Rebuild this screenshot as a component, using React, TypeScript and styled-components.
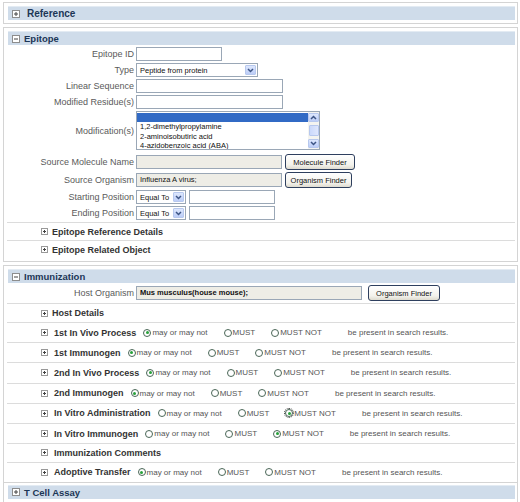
import React from "react";
import styled, { createGlobalStyle } from "styled-components";

const GlobalStyle = createGlobalStyle`
  html, body {
    margin: 0;
    padding: 0;
    background: #fff;
  }
  body {
    font-family: "Liberation Sans", Arial, sans-serif;
    font-size: 9px;
    color: #555;
  }
`;

const Page = styled.div`
  width: 520px;
  padding: 2px 2px 0 3px;
  box-sizing: border-box;
`;

const Panel = styled.section<{ $joined?: boolean; $flush?: boolean }>`
  border: 1px solid #d4d4d4;
  border-top: ${(p) => (p.$joined ? "none" : "1px solid #d4d4d4")};
  padding: ${(p) => (p.$joined ? "2px" : "3px")} 2px ${(p) => (p.$flush ? "0" : "3px")} 4px;
  margin-bottom: ${(p) => (p.$flush ? "0" : "3px")};
`;

const Header = styled.div`
  display: flex;
  align-items: center;
  gap: 4px;
  height: 13px;
  padding-left: 4px;
  background: #cfdcea;
  border-top: 1px solid #e3ebf3;
  font-size: 9.5px;
  font-weight: bold;
  color: #1c3656;
`;

const HeaderTitle = styled.span<{ $large?: boolean }>`
  font-size: ${(p) => (p.$large ? "10px" : "9.5px")};
  margin-left: ${(p) => (p.$large ? "3px" : "0")};
`;

const ToggleBox = styled.span<{ $size: number }>`
  display: inline-flex;
  width: ${(p) => p.$size}px;
  height: ${(p) => p.$size}px;
  flex: none;
`;

const Toggle = ({ open }: { open?: boolean }) => (
  <ToggleBox $size={8}>
    <svg width="8" height="8" viewBox="0 0 8 8">
      <rect x="0.5" y="0.5" width="7" height="7" fill="#fff" stroke="#8d8d8d" />
      <path d="M2 4h4" stroke="#444" />
      {!open && <path d="M4 2v4" stroke="#444" />}
    </svg>
  </ToggleBox>
);

const SmallToggle = () => (
  <ToggleBox $size={7}>
    <svg width="7" height="7" viewBox="0 0 7 7">
      <rect x="0.5" y="0.5" width="6" height="6" fill="#fff" stroke="#999" />
      <path d="M2 3.5h3M3.5 2v3" stroke="#444" />
    </svg>
  </ToggleBox>
);

const FormGrid = styled.div`
  display: grid;
  grid-template-columns: 126px auto;
  column-gap: 2px;
  row-gap: 2px;
  padding-top: 2px;
  align-items: center;
`;

const Label = styled.div<{ $tall?: boolean }>`
  text-align: right;
  font-size: 9px;
  color: #5a5a5a;
  white-space: nowrap;
  margin-bottom: ${(p) => (p.$tall ? "2px" : "0")};
`;

const Field = styled.div<{ $tall?: boolean }>`
  display: flex;
  align-items: center;
  gap: 3px;
  margin-bottom: ${(p) => (p.$tall ? "2px" : "0")};
`;

const TextBox = styled.div<{ $w: number; $filled?: boolean; $bold?: boolean }>`
  width: ${(p) => p.$w}px;
  height: 14px;
  box-sizing: border-box;
  border: 1px solid #9aa7b6;
  background: ${(p) => (p.$filled ? "#eeede6" : "#fff")};
  font-size: 7.5px;
  font-weight: ${(p) => (p.$bold ? "bold" : "normal")};
  color: #111;
  line-height: 12px;
  padding-left: 3px;
  white-space: nowrap;
  overflow: hidden;
`;

const SelectBox = styled.div<{ $w: number }>`
  width: ${(p) => p.$w}px;
  height: 14px;
  box-sizing: border-box;
  border: 1px solid #9aa7b6;
  background: #fff;
  display: flex;
  align-items: center;
  justify-content: space-between;
  padding: 0 1px 0 3px;
  font-size: 7.5px;
  color: #111;
`;

const ArrowBtn = styled.span<{ $h?: number }>`
  width: 11px;
  height: ${(p) => p.$h ?? 10}px;
  box-sizing: border-box;
  border: 1px solid #b7c8ee;
  border-radius: 1px;
  background: linear-gradient(#dde7fd, #bccdf7);
  display: inline-flex;
  align-items: center;
  justify-content: center;
  flex: none;
`;

const Chevron = ({ up }: { up?: boolean }) => (
  <svg width="7" height="5" viewBox="0 0 7 5">
    <path
      d={up ? "M1 4L3.5 1.5L6 4" : "M1 1L3.5 3.5L6 1"}
      fill="none"
      stroke="#3d5585"
      strokeWidth="1.5"
    />
  </svg>
);

const Select = ({ w, value }: { w: number; value: string }) => (
  <SelectBox $w={w}>
    <span>{value}</span>
    <ArrowBtn>
      <Chevron />
    </ArrowBtn>
  </SelectBox>
);

const ListBox = styled.div`
  width: 184px;
  height: 39px;
  box-sizing: border-box;
  border: 1px solid #9aa7b6;
  background: #fff;
  display: flex;
  overflow: hidden;
`;

const Options = styled.div`
  flex: 1;
  font-size: 7.5px;
  color: #111;
  padding-top: 1px;
`;

const Option = styled.div<{ $selected?: boolean }>`
  height: 9.3px;
  line-height: 9.3px;
  padding-left: 3px;
  white-space: nowrap;
  background: ${(p) => (p.$selected ? "#316ac5" : "transparent")};
`;

const ScrollTrack = styled.div`
  width: 11px;
  background: #f4f4f0;
  display: flex;
  flex-direction: column;
  justify-content: space-between;
  align-items: center;
  padding: 1px 0;
`;

const Thumb = styled.span`
  width: 10px;
  height: 11px;
  box-sizing: border-box;
  border: 1px solid #b7c8ee;
  border-radius: 1px;
  background: linear-gradient(90deg, #cbd9fb, #dfe7fd);
`;

const Button = styled.div<{ $w: number; $push?: number }>`
  width: ${(p) => p.$w}px;
  height: 16px;
  box-sizing: border-box;
  margin-left: ${(p) => p.$push ?? 0}px;
  border: 1px solid #2e3f5e;
  border-radius: 3px;
  background: linear-gradient(#ffffff, #f3f2ec 70%, #dedbcf);
  font-size: 7.5px;
  color: #111;
  display: flex;
  align-items: center;
  justify-content: center;
  white-space: nowrap;
  flex: none;
`;

const SubRow = styled.div<{ $h?: number; $first?: boolean }>`
  display: flex;
  align-items: center;
  height: ${(p) => p.$h ?? 17}px;
  margin-left: -1px;
  padding-left: 34px;
  border-top: 1px solid #dcdcdc;
  margin-top: ${(p) => (p.$first ? "2px" : "0")};
  white-space: nowrap;
`;

const SubTitle = styled.span<{ $gap?: number }>`
  font-size: 9px;
  font-weight: bold;
  color: #333;
  margin-left: ${(p) => p.$gap ?? 4}px;
`;

const RadioGroup = styled.div`
  display: flex;
  align-items: center;
  margin-left: 7px;
  font-size: 8px;
  color: #555;
`;

const RadioItem = styled.span`
  display: inline-flex;
  align-items: center;
  margin-right: 16px;
`;

const RadioDot = styled.span<{ $checked?: boolean; $focus?: boolean }>`
  width: 8px;
  height: 8px;
  box-sizing: border-box;
  border: 1px solid #4a6657;
  border-radius: 50%;
  margin-right: 1px;
  display: inline-flex;
  align-items: center;
  justify-content: center;
  outline: ${(p) => (p.$focus ? "1px dotted #333" : "none")};
  outline-offset: 0;
  &::after {
    content: "";
    width: 3px;
    height: 3px;
    border-radius: 50%;
    background: ${(p) => (p.$checked ? "#27a13a" : "transparent")};
  }
`;

const Trailing = styled.span`
  margin-left: 10px;
`;

const choices = ["may or may not", "MUST", "MUST NOT"];

const Radios = ({ checked, focus }: { checked: number; focus?: boolean }) => (
  <RadioGroup>
    {choices.map((c, i) => (
      <RadioItem key={c}>
        <RadioDot $checked={checked === i} $focus={focus && checked === i} />
        {c}
      </RadioItem>
    ))}
    <Trailing>be present in search results.</Trailing>
  </RadioGroup>
);

type ImmRow = { title: string; checked?: number; focus?: boolean };

const immunizationRows: ImmRow[] = [
  { title: "1st In Vivo Process", checked: 0 },
  { title: "1st Immunogen", checked: 0 },
  { title: "2nd In Vivo Process", checked: 0 },
  { title: "2nd Immunogen", checked: 0 },
  { title: "In Vitro Administration", checked: 2, focus: true },
  { title: "In Vitro Immunogen", checked: 2 },
  { title: "Immunization Comments" },
  { title: "Adoptive Transfer", checked: 0 },
];

const modifications = [
  "",
  "1,2-dimethylpropylamine",
  "2-aminoisobutiric acid",
  "4-azidobenzoic acid (ABA)",
];

export default function App() {
  return (
    <>
      <GlobalStyle />
      <Page>
        <Panel>
          <Header>
            <Toggle />
            <HeaderTitle $large>Reference</HeaderTitle>
          </Header>
        </Panel>

        <Panel>
          <Header>
            <Toggle open />
            <HeaderTitle>Epitope</HeaderTitle>
          </Header>
          <FormGrid>
            <Label>Epitope ID</Label>
            <Field>
              <TextBox $w={86} />
            </Field>
            <Label>Type</Label>
            <Field>
              <Select w={122} value="Peptide from protein" />
            </Field>
            <Label>Linear Sequence</Label>
            <Field>
              <TextBox $w={147} />
            </Field>
            <Label>Modified Residue(s)</Label>
            <Field>
              <TextBox $w={147} />
            </Field>
            <Label $tall>Modification(s)</Label>
            <Field $tall>
              <ListBox>
                <Options>
                  {modifications.map((m, i) => (
                    <Option key={i} $selected={i === 0}>
                      {m}
                    </Option>
                  ))}
                </Options>
                <ScrollTrack>
                  <ArrowBtn $h={9}>
                    <Chevron up />
                  </ArrowBtn>
                  <Thumb />
                  <ArrowBtn $h={9}>
                    <Chevron />
                  </ArrowBtn>
                </ScrollTrack>
              </ListBox>
            </Field>
            <Label>Source Molecule Name</Label>
            <Field>
              <TextBox $w={146} $filled />
              <Button $w={70}>Molecule Finder</Button>
            </Field>
            <Label>Source Organism</Label>
            <Field>
              <TextBox $w={146} $filled>
                Influenza A virus;
              </TextBox>
              <Button $w={67}>Organism Finder</Button>
            </Field>
            <Label>Starting Position</Label>
            <Field>
              <Select w={50} value="Equal To" />
              <TextBox $w={86} />
            </Field>
            <Label>Ending Position</Label>
            <Field>
              <Select w={50} value="Equal To" />
              <TextBox $w={86} />
            </Field>
          </FormGrid>
          <SubRow $first>
            <SmallToggle />
            <SubTitle>Epitope Reference Details</SubTitle>
          </SubRow>
          <SubRow>
            <SmallToggle />
            <SubTitle>Epitope Related Object</SubTitle>
          </SubRow>
        </Panel>

        <Panel $flush>
          <Header>
            <Toggle open />
            <HeaderTitle>Immunization</HeaderTitle>
          </Header>
          <FormGrid>
            <Label>Host Organism</Label>
            <Field>
              <TextBox $w={226} $filled $bold>
                Mus musculus(house mouse);
              </TextBox>
              <Button $w={72} $push={3}>
                Organism Finder
              </Button>
            </Field>
          </FormGrid>
          <SubRow $first $h={18}>
            <SmallToggle />
            <SubTitle>Host Details</SubTitle>
          </SubRow>
          {immunizationRows.map((r) => (
            <SubRow key={r.title} $h={r.checked === undefined ? 17.5 : 19.2}>
              <SmallToggle />
              <SubTitle $gap={6}>{r.title}</SubTitle>
              {r.checked !== undefined && <Radios checked={r.checked} focus={r.focus} />}
            </SubRow>
          ))}
        </Panel>

        <Panel $joined>
          <Header>
            <Toggle />
            <HeaderTitle>T Cell Assay</HeaderTitle>
          </Header>
        </Panel>
      </Page>
    </>
  );
}
